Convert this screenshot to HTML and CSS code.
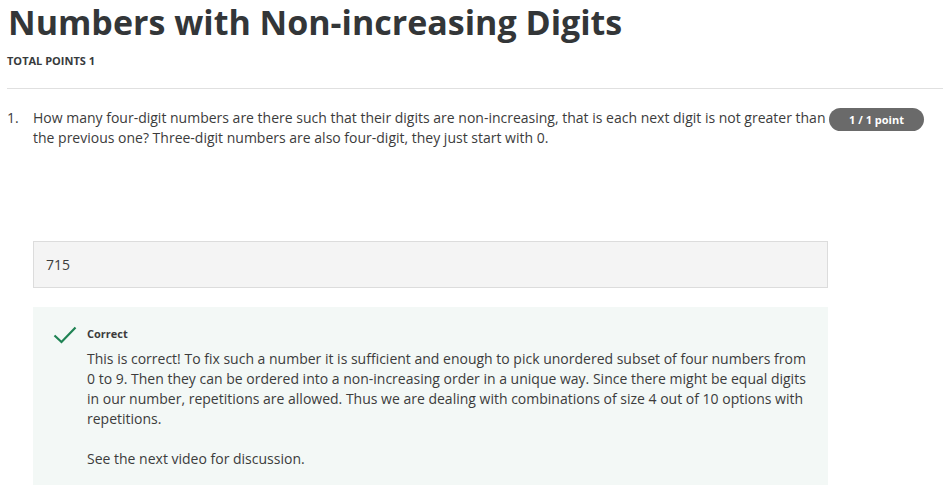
FILE: index.html
```html
<!DOCTYPE html>
<html>
<head>
<meta charset="utf-8">
<link rel="stylesheet" href="styles.css">
</head>
<body>
<div class="page">
  <h1 class="title">Numbers with Non-increasing Digits</h1>
  <div class="total">TOTAL POINTS 1</div>
  <hr class="divider">
  <div class="question">
    <div class="qnum">1.</div>
    <div class="qbody">
      <div class="qtext">How many four-digit numbers are there such that their digits are non-increasing, that is each next digit is not greater than the previous one? Three-digit numbers are also four-digit, they just start with 0.</div>
      <div class="answer">715</div>
      <div class="feedback">
        <svg class="check" width="24" height="18" viewBox="0 0 24 18"><path d="M1.5 9.5 L8.5 16 L22.5 1.5" fill="none" stroke="#1f8354" stroke-width="2.2"/></svg>
        <div class="fbody">
          <div class="fhead">Correct</div>
          <p>This is correct! To fix such a number it is sufficient and enough to pick unordered subset of four numbers from 0 to 9. Then they can be ordered into a non-increasing order in a unique way. Since there might be equal digits in our number, repetitions are allowed. Thus we are dealing with combinations of size 4 out of 10 options with repetitions.</p>
          <p>See the next video for discussion.</p>
        </div>
      </div>
    </div>
    <div class="badge">1 / 1 point</div>
  </div>
</div>
</body>
</html>
```
FILE: styles.css
```css
html, body {
  margin: 0;
  padding: 0;
  background: #fff;
}
body {
  font-family: "Open Sans", sans-serif;
  color: #373a3c;
  overflow: hidden;
}
.page {
  padding: 0 6px 0 7px;
}
.title {
  margin: 0;
  font-size: 34px;
  font-weight: 700;
  line-height: 44px;
  color: #333638;
  padding-left: 1px;
}
.total {
  margin-top: 9px;
  font-size: 11px;
  font-weight: 700;
  line-height: 16px;
  color: #373a3c;
}
.divider {
  margin: 19px 0 0 0;
  border: 0;
  border-top: 1px solid #e0e0e0;
  height: 0;
}
.question {
  display: flex;
  margin-top: 19px;
  position: relative;
}
.qnum {
  width: 26px;
  font-size: 14px;
  line-height: 20px;
  color: #3c3c3c;
  flex: none;
}
.qbody {
  width: 795px;
}
.qtext {
  font-size: 14px;
  line-height: 20px;
  color: #3c3c3c;
}
.badge {
  position: absolute;
  left: 822px;
  top: 0;
  width: 95px;
  height: 23px;
  border-radius: 12px;
  background: #6a6a6a;
  color: #fff;
  font-size: 11px;
  font-weight: 700;
  line-height: 23px;
  text-align: center;
}
.answer {
  margin-top: 93px;
  height: 47px;
  box-sizing: border-box;
  border: 1px solid #dcdcdc;
  background: #f4f4f4;
  padding: 0 12px;
  font-size: 14px;
  line-height: 45px;
  color: #3c3c3c;
}
.feedback {
  margin-top: 19px;
  background: #f3f8f6;
  display: flex;
  padding: 19px 20px 10px 20px;
  height: 178px;
  box-sizing: border-box;
}
.check {
  flex: none;
  margin-top: 0;
  margin-right: 10px;
}
.fbody {
  font-size: 14px;
  line-height: 20px;
  color: #3c3c3c;
}
.fhead {
  font-size: 11px;
  font-weight: 700;
  line-height: 16px;
  margin-bottom: 7px;
}
.fbody p {
  margin: 0 0 20px 0;
}
```
